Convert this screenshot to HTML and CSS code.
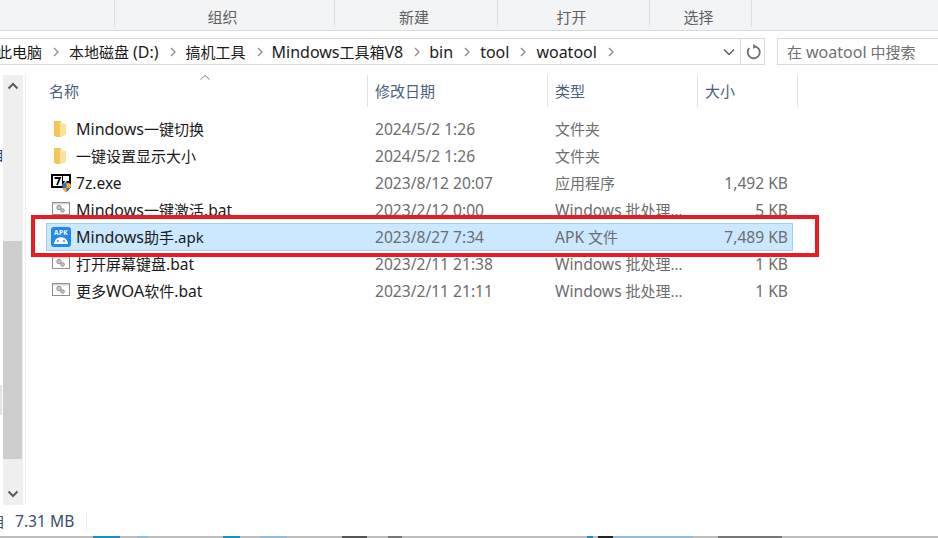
FILE: index.html
```html
<!DOCTYPE html>
<html lang="zh-CN">
<head>
<meta charset="utf-8">
<title>woatool</title>
<link rel="stylesheet" href="styles.css">
</head>
<body>
<div class="window">
  <div class="ribbon">
    <div class="tab tab-empty"></div>
    <div class="tab tab-org">组织</div>
    <div class="tab tab-new">新建</div>
    <div class="tab tab-open">打开</div>
    <div class="tab tab-sel">选择</div>
  </div>
  <div class="navbar">
    <div class="address">
      <div class="crumbs">
        <span>此电脑</span><svg class="sep" viewBox="0 0 8 10"><path d="M2 1l4 4-4 4"/></svg>
        <span>本地磁盘 <span class="adr">(D:)</span></span><svg class="sep" viewBox="0 0 8 10"><path d="M2 1l4 4-4 4"/></svg>
        <span>搞机工具</span><svg class="sep" viewBox="0 0 8 10"><path d="M2 1l4 4-4 4"/></svg>
        <span class="tight"><span class="adr">Mindows</span>工具箱<span class="adr">V8</span></span><svg class="sep" viewBox="0 0 8 10"><path d="M2 1l4 4-4 4"/></svg>
        <span class="adr tight">bin</span><svg class="sep" viewBox="0 0 8 10"><path d="M2 1l4 4-4 4"/></svg>
        <span class="adr">tool</span><svg class="sep" viewBox="0 0 8 10"><path d="M2 1l4 4-4 4"/></svg>
        <span class="adr">woatool</span><svg class="sep" viewBox="0 0 8 10"><path d="M2 1l4 4-4 4"/></svg>
      </div>
      <svg class="drop" viewBox="0 0 12 8"><path d="M1 1.5l5 5 5-5"/></svg>
      <div class="refresh"><svg viewBox="0 0 16 16"><path d="M9.500 2.300a6 6 0 1 1-5.200 1.900"/><path class="fill" d="M8.200 0v5l3.400-2.500z"/></svg></div>
    </div>
    <div class="search">在 <span class="adr">woatool</span> 中搜索</div>
  </div>
  <div class="main">
    <div class="edge"><span class="edge-char">目</span><div class="edge-strip"></div></div>
    <div class="scrollbar">
      <svg class="arrow" viewBox="0 0 12 8"><path d="M1.500 6.500L6 2l4.500 4.500"/></svg>
      <div class="track"><div class="thumb"></div></div>
      <svg class="arrow" viewBox="0 0 12 8"><path d="M1.500 1.500L6 6l4.500-4.500"/></svg>
    </div>
    <div class="content">
      <div class="header">
        <svg class="sort" viewBox="0 0 10 5"><path d="M.5 4.500L5 .5l4.500 4"/></svg>
        <div class="hcol hname">名称</div>
        <div class="hcol">修改日期</div>
        <div class="hcol">类型</div>
        <div class="hcol">大小</div>
      </div>
      <div class="rows">
        <div class="row">
          <span class="name"><svg class="icon" viewBox="0 0 20 18"><use href="#folder"/></svg><span><span class="adr">Mindows</span>一键切换</span></span>
          <span class="lat">2024/5/2 1:26</span><span>文件夹</span><span class="size lat"></span>
        </div>
        <div class="row">
          <span class="name"><svg class="icon" viewBox="0 0 20 18"><use href="#folder"/></svg><span>一键设置显示大小</span></span>
          <span class="lat">2024/5/2 1:26</span><span>文件夹</span><span class="size lat"></span>
        </div>
        <div class="row">
          <span class="name"><svg class="icon" viewBox="0 0 20 18"><rect width="20" height="14" fill="#000"/><rect x="2" y="2" width="9" height="10" fill="#fff"/><path d="M3.500 4H9L6 11" fill="none" stroke="#000" stroke-width="1.800"/><rect x="12" y="2" width="6" height="5" fill="#fff"/><path d="M12.500 4h5M17 4l-4 6h5" fill="none" stroke="#fff" stroke-width="1.300"/><path d="M15.500 8.500l4.500 1.500c0 4-1.700 6.300-4.500 8-2.800-1.700-4.500-4-4.500-8z" fill="#2f6fc4"/><path d="M15.500 8.500l4.500 1.500c0 1.500-.2 2.700-.7 4h-3.800zM15.500 14v4.500c-2.200-1.300-3.600-2.600-4.100-4.500z" fill="#f2b02e"/></svg><span class="lat">7z.exe</span></span>
          <span class="lat">2023/8/12 20:07</span><span>应用程序</span><span class="size lat">1,492 KB</span>
        </div>
        <div class="row">
          <span class="name"><svg class="icon" viewBox="0 0 20 18"><use href="#bat"/></svg><span><span class="adr">Mindows</span>一键激活<span class="lat">.bat</span></span></span>
          <span class="lat">2023/2/12 0:00</span><span><span class="lat">Windows</span> 批处理...</span><span class="size lat">5 KB</span>
        </div>
        <div class="row selected">
          <span class="name"><svg class="icon icon-apk" viewBox="0 0 20 20"><rect width="20" height="20" rx="3" fill="#2488f2"/><text x="10" y="8" class="apk">APK</text><path d="M3 17c.3-4.200 3.200-6.800 7-6.800s6.700 2.600 7 6.800z" fill="#fff"/><circle cx="7" cy="14" r=".9" fill="#2488f2"/><circle cx="13" cy="14" r=".9" fill="#2488f2"/></svg><span><span class="adr">Mindows</span>助手<span class="ext">.apk</span></span></span>
          <span class="lat">2023/8/27 7:34</span><span><span class="lat">APK</span> 文件</span><span class="size lat">7,489 KB</span>
        </div>
        <div class="row">
          <span class="name"><svg class="icon" viewBox="0 0 20 18"><use href="#bat"/></svg><span>打开屏幕键盘<span class="lat">.bat</span></span></span>
          <span class="lat">2023/2/11 21:38</span><span><span class="lat">Windows</span> 批处理...</span><span class="size lat">1 KB</span>
        </div>
        <div class="row">
          <span class="name"><svg class="icon" viewBox="0 0 20 18"><use href="#bat"/></svg><span>更多<span class="wide">WOA</span>软件<span class="lat">.bat</span></span></span>
          <span class="lat">2023/2/11 21:11</span><span><span class="lat">Windows</span> 批处理...</span><span class="size lat">1 KB</span>
        </div>
      </div>
      <div class="highlight"></div>
    </div>
  </div>
  <div class="status">
    <span class="status-cut">目</span><span class="status-size lat">7.31 MB</span>
  </div>
  <div class="taskline"></div>
</div>
<svg class="defs" aria-hidden="true">
  <defs>
    <symbol id="folder" viewBox="0 0 20 18">
      <path d="M3 1h7v16H6l-3-1z" fill="#f2c65c"/>
      <path d="M9 3l6 1v11l-6 2z" fill="#fbe29a"/>
    </symbol>
    <symbol id="bat" viewBox="0 0 20 18">
      <rect x="1.500" y="1.500" width="17" height="12" fill="#fff" stroke="#8f8f8f"/>
      <rect x="2" y="2" width="16" height="1.500" fill="#d6d6d6"/>
      <circle cx="8" cy="6.500" r="2.200" fill="#c3c8cc" stroke="#8d9296"/>
      <circle cx="11.500" cy="9.500" r="1.800" fill="#c3c8cc" stroke="#8d9296"/>
    </symbol>
  </defs>
</svg>
</body>
</html>
```
FILE: styles.css
```css
* { box-sizing: border-box; }
html, body { margin: 0; padding: 0; background: #fff; overflow: hidden; }
body { width: 938px; height: 538px; font-family: "Noto Sans", "Noto Sans CJK SC", sans-serif; font-size: 15px; color: #1a1a1a; }
.defs { width: 0; height: 0; position: absolute; }
.window { width: 938px; height: 538px; display: flex; flex-direction: column; overflow: hidden; }
.lat { font-size: 15.600px; }
.adr { font-size: 16px; }
.ext { font-size: 15px; }
.wide { font-size: 16.500px; }
.tight { margin-left: -1px; }

.ribbon { height: 31px; flex: none; display: flex; background: #f3f4f6; border-bottom: 1px solid #dadbdc; padding-bottom: 3px; color: #5f5f5f; font-size: 15px; }
.tab { display: flex; align-items: center; justify-content: center; border-right: 1px solid #dfdfdf; padding: 6px 4px 0 0; }
.tab-empty { width: 115px; }
.tab-org { width: 220px; }
.tab-new { width: 163px; }
.tab-open { width: 152px; }
.tab-sel { width: 102px; }

.navbar { height: 44px; flex: none; display: flex; padding-top: 7px; padding-bottom: 10px; background: #fff; }
.address { width: 765px; display: flex; align-items: center; border: 1px solid #d9d9d9; border-left: 0; }
.crumbs { flex: 1; display: flex; align-items: center; margin-left: -3px; white-space: nowrap; overflow: hidden; }
.sep { width: 8px; height: 10px; margin: 0 9px 0 10px; fill: none; stroke: #8a8a8a; stroke-width: 1.300; }
.drop { width: 12px; height: 8px; margin-right: 5px; fill: none; stroke: #5e5e5e; stroke-width: 1.500; }
.refresh { width: 24px; height: 100%; display: flex; align-items: center; justify-content: center; border-left: 1px solid #d9d9d9; }
.refresh svg { width: 16px; height: 16px; fill: none; stroke: #6e6e6e; stroke-width: 1.800; }
.refresh .fill { fill: #6e6e6e; stroke: none; }
.search { flex: 1; margin-left: 12px; display: flex; align-items: center; gap: 4px; padding-left: 9px; border: 1px solid #d9d9d9; border-right: 0; color: #6f6f6f; }

.main { flex: 1; min-height: 0; display: flex; }
.edge { width: 3px; flex: none; overflow: hidden; position: relative; }
.edge-char { display: block; margin: 70px 0 0 -9px; font-size: 13px; color: #1a3a6a; }
.edge-strip { position: absolute; left: 0; top: 310px; width: 2px; height: 30px; background: #e4e4e4; }
.scrollbar { width: 20px; flex: none; display: flex; flex-direction: column; background: #efefef; align-items: center; }
.arrow { width: 12px; height: 8px; margin: 7px 0; flex: none; fill: none; stroke: #5c5c5c; stroke-width: 2; }
.track { flex: 1; width: 100%; padding-top: 144px; padding-bottom: 24px; padding-right: 1px; }
.thumb { height: 218px; background: #cdcdcd; }
.content { flex: 1; position: relative; margin-left: 2px; border-left: 1px solid #efefef; }

.header { display: grid; grid-template-columns: 342px 180px 150px 100px; height: 32px; position: relative; color: #4c607a; font-size: 15px; }
.hcol { display: flex; align-items: center; padding: 0 0 2px 7px; border-right: 1px solid #e1e1e1; }
.hname { padding-left: 23px; }
.sort { position: absolute; left: 174px; top: 0; width: 10px; height: 5px; fill: none; stroke: #7a7a7a; }

.rows { display: flex; flex-direction: column; margin-top: 8px; padding-left: 20px; }
.row { display: grid; grid-template-columns: 328px 180px 150px 83px; width: 747px; height: 27px; align-items: center; color: #6d6d6d; border: 1px solid transparent; }
.row.selected { background: #cce8ff; border-color: #99d1ff; height: 28px; margin-bottom: -1px; padding-bottom: 1px; }
.name { display: flex; align-items: center; color: #1a1a1a; padding-left: 4px; }
.icon { width: 20px; height: 18px; margin-right: 5px; flex: none; }
.icon-apk { height: 20px; }
.apk { font-size: 6.500px; font-weight: 700; fill: #fff; text-anchor: middle; letter-spacing: .3px; font-family: "Noto Sans", sans-serif; }
.size { text-align: right; }

.highlight { position: absolute; left: 5px; top: 140px; width: 788px; height: 42px; border: 4px solid #e81c24; }

.status { height: 31px; flex: none; display: flex; align-items: center; color: #35506f; font-size: 15px; overflow: hidden; }
.status-cut { margin-left: -9px; width: 15px; overflow: hidden; font-size: 14px; }
.status-size { margin-left: 9px; padding-right: 12px; height: 20px; line-height: 20px; border-right: 1px solid #efefef; }
.taskline { height: 2px; flex: none; background: linear-gradient(90deg, #bdbdbd 93px, #1a8fc4 93px 120px, #bdbdbd 120px 137px, #8fbfd8 137px 148px, #bdbdbd 148px 223px, #1a8fc4 223px 240px, #bdbdbd 240px 260px, #8fbfd8 260px 287px, #bdbdbd 287px 342px, #555 342px 367px, #bdbdbd 367px 388px, #777 388px 402px, #bdbdbd 402px 587px, #1a8fc4 587px 593px, #bdbdbd 593px 598px, #222 598px 613px, #8fbfd8 613px 693px, #bdbdbd 693px 718px, #777 718px 782px, #bdbdbd 782px); }
```
